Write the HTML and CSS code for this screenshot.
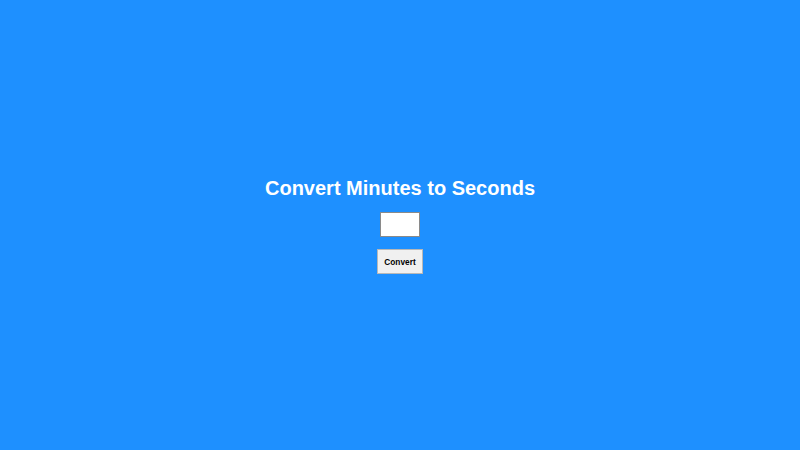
FILE: index.html
```html
<!DOCTYPE html>
<html lang="en">
<head>
<meta charset="utf-8">
<title>Convert Minutes to Seconds</title>
<link rel="stylesheet" href="styles.css">
</head>
<body>
<main class="app">
  <h1 class="title">Convert Minutes to Seconds</h1>
  <input class="minutes" type="text" aria-label="Minutes">
  <button class="convert" type="button">Convert</button>
</main>
</body>
</html>
```
FILE: styles.css
```css
html, body {
  margin: 0;
  padding: 0;
}
body {
  background: #1e90ff;
  font-family: "Liberation Sans", Arial, sans-serif;
}
.app {
  box-sizing: border-box;
  min-height: 100vh;
  padding-top: 2px;
  display: flex;
  flex-direction: column;
  align-items: center;
  justify-content: center;
}
.title {
  margin: 0 0 14px;
  font-size: 20px;
  line-height: 20px;
  font-weight: bold;
  color: #ffffff;
}
.minutes {
  box-sizing: border-box;
  width: 40px;
  height: 25px;
  margin: 0 0 12px;
  padding: 2px 4px;
  border: 1px solid #8a8a8a;
  background: #ffffff;
  font-family: "Liberation Sans", Arial, sans-serif;
  font-size: 13px;
}
.convert {
  box-sizing: border-box;
  width: 46px;
  height: 25px;
  padding: 1px 0 0;
  border: 1px solid #b8b8b8;
  background: #f0f0f0;
  color: #000000;
  font-family: "Liberation Sans", Arial, sans-serif;
  font-size: 8.3px;
  font-weight: bold;
}
```
